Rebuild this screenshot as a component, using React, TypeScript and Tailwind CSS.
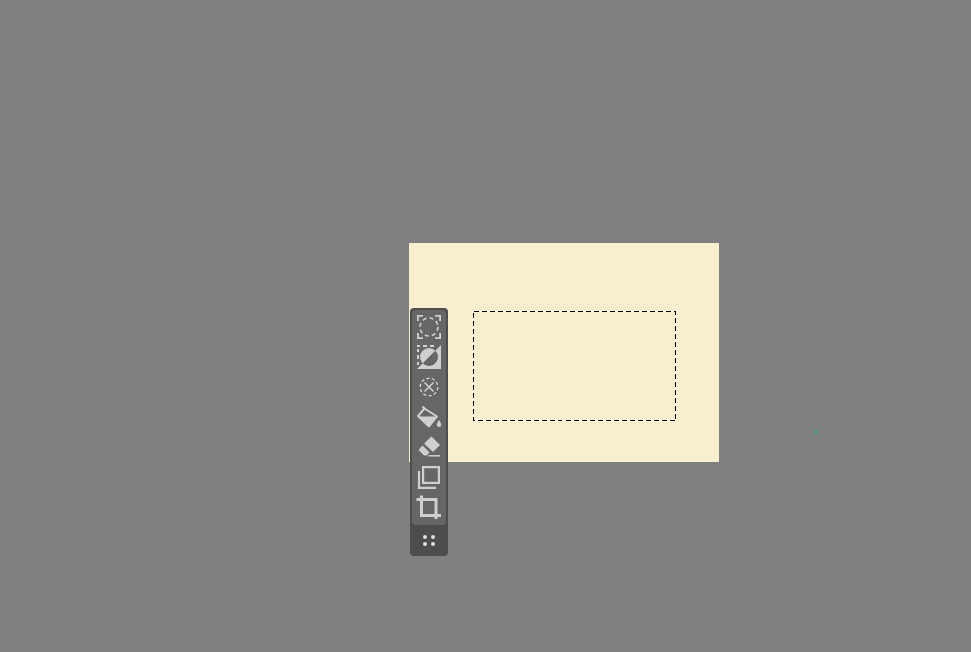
const L = "#cfcfcf";

const icons = [
  <g key="select">
    <path d="M3.900 9V3.900H9M21 3.900h5.100V9M26.100 21v5.100H21M9 26.100H3.900V21" fill="none" stroke={L} strokeWidth="1.800" />
    <circle cx="15" cy="15" r="9" fill="none" stroke={L} strokeWidth="1.600" strokeDasharray="4.100 3" />
  </g>,
  <g key="invert">
    <path d="M3 4h3M9 4h4M16 4h4M4 7v3M4 13v4M4 20v3" stroke={L} strokeWidth="2" fill="none" />
    <path fillRule="evenodd" d="M27 3V27H3ZM15 6a9 9 0 1 0 0 18a9 9 0 1 0 0-18Z" fill={L} />
  </g>,
  <g key="clear">
    <circle cx="15" cy="15" r="8.800" fill="none" stroke={L} strokeWidth="1.400" strokeDasharray="3.200 2.300" />
    <path d="M10.500 10.500l9 9M19.500 10.500l-9 9" stroke={L} strokeWidth="1.600" fill="none" />
  </g>,
  <g key="fill">
    <path d="M8.500 4.500l3 3" stroke={L} strokeWidth="2" fill="none" />
    <path d="M10.500 6.500L23 14.500L15 24.500L4 14Z" fill="none" stroke={L} strokeWidth="2" strokeLinejoin="round" />
    <path d="M4.500 14.500H23L15 24.500Z" fill={L} />
    <path d="M25 18c-1.400 2.400-2.200 3.500-2.200 4.700a2.200 2.200 0 0 0 4.400 0c0-1.200-.8-2.300-2.200-4.700Z" fill={L} />
  </g>,
  <g key="erase">
    <path d="M17.500 4.500L26 13L19 20L10 11.500Z" fill={L} />
    <path d="M8.500 13.500L15.500 20.500L13 23.500H10L4.500 18Z" fill={L} />
    <path d="M14.500 23.800H26" stroke={L} strokeWidth="1.500" fill="none" />
  </g>,
  <g key="copy">
    <rect x="9.100" y="5.100" width="15.800" height="15.800" fill="none" stroke={L} strokeWidth="2.200" />
    <path d="M5 9V25.900H22" fill="none" stroke={L} strokeWidth="2.200" />
  </g>,
  <g key="crop">
    <path d="M7.500 3.500V23.500H27M2.500 7.500H22V27" fill="none" stroke={L} strokeWidth="3" />
  </g>,
];

export default function App() {
  return (
    <div className="relative h-[652px] w-full overflow-hidden bg-[#808080]">
      <div className="absolute left-[409px] top-[243px] h-[219px] w-[310px] bg-[#f8efd0]" />
      <svg className="absolute left-[473px] top-[311px]" width="203" height="110" viewBox="0 0 203 110" fill="none" shapeRendering="crispEdges">
        <rect x="0.5" y="0.5" width="202" height="109" stroke="#ffffff" />
        <rect x="0.5" y="0.5" width="202" height="109" stroke="#000000" strokeDasharray="5 3" />
      </svg>
      <div className="absolute left-[814px] top-[430px] h-[4px] w-[4px] rounded-full bg-[#4f9060]" />
      <div className="absolute left-[410px] top-[308px] flex h-[248px] w-[38px] flex-col rounded-[4px] bg-[#4d4d4d] px-[2px] pt-[2px]">
        <div className="flex h-[215px] w-[34px] flex-col items-center rounded-[4px] bg-[#666666] pt-[2px]">
          {icons.map((icon, i) => (
            <svg key={i} width="30" height="30" viewBox="0 0 30 30" className="block shrink-0">
              {icon}
            </svg>
          ))}
        </div>
        <div className="flex flex-1 items-center justify-center">
          <div className="grid grid-cols-2 gap-x-[4px] gap-y-[3px]">
            <span className="h-[4px] w-[4px] rounded-full bg-[#e0e0e0]" />
            <span className="h-[4px] w-[4px] rounded-full bg-[#e0e0e0]" />
            <span className="h-[4px] w-[4px] rounded-full bg-[#e0e0e0]" />
            <span className="h-[4px] w-[4px] rounded-full bg-[#e0e0e0]" />
          </div>
        </div>
      </div>
    </div>
  );
}
